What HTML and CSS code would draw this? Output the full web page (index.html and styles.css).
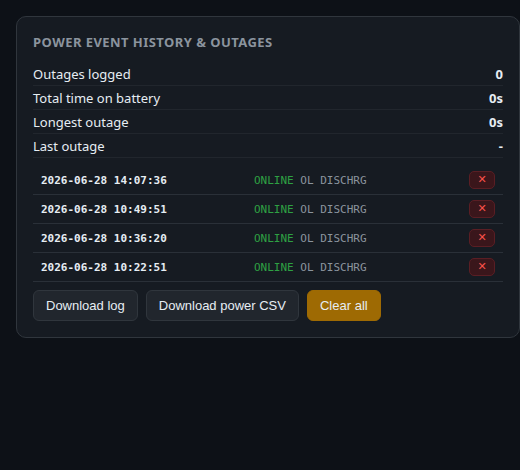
FILE: index.html
```html
<!DOCTYPE html>
<html>
<head>
<meta charset="utf-8">
<link rel="stylesheet" href="styles.css">
</head>
<body>
<section class="card">
  <h2 class="title">Power Event History &amp; Outages</h2>
  <div class="stats">
    <div class="stat"><span>Outages logged</span><b>0</b></div>
    <div class="stat"><span>Total time on battery</span><b>0s</b></div>
    <div class="stat"><span>Longest outage</span><b>0s</b></div>
    <div class="stat"><span>Last outage</span><b>-</b></div>
  </div>
  <div class="events">
    <div class="event"><span class="ts">2026-06-28 14:07:36</span><span class="st"><span class="ok">ONLINE</span> OL DISCHRG</span><button class="del">✕</button></div>
    <div class="event"><span class="ts">2026-06-28 10:49:51</span><span class="st"><span class="ok">ONLINE</span> OL DISCHRG</span><button class="del">✕</button></div>
    <div class="event"><span class="ts">2026-06-28 10:36:20</span><span class="st"><span class="ok">ONLINE</span> OL DISCHRG</span><button class="del">✕</button></div>
    <div class="event"><span class="ts">2026-06-28 10:22:51</span><span class="st"><span class="ok">ONLINE</span> OL DISCHRG</span><button class="del">✕</button></div>
  </div>
  <div class="actions">
    <button class="btn">Download log</button>
    <button class="btn">Download power CSV</button>
    <button class="btn warn">Clear all</button>
  </div>
</section>
</body>
</html>
```
FILE: styles.css
```css
html, body {
  margin: 0;
  background: #0d1117;
}
body {
  padding: 16px 0 0 16px;
  font-family: "Noto Sans", "DejaVu Sans", sans-serif;
  color: #e6edf3;
}
.card {
  box-sizing: border-box;
  width: 504px;
  background: #161b22;
  border: 1px solid #30363d;
  border-radius: 10px;
  padding: 15px 16px 16px;
}
.title {
  margin: 0 0 10px;
  font-size: 13px;
  line-height: 20px;
  font-weight: 700;
  text-transform: uppercase;
  letter-spacing: 0.45px;
  color: #8b949e;
}
.stat {
  display: flex;
  justify-content: space-between;
  align-items: center;
  height: 23px;
  border-bottom: 1px solid #21262d;
  font-size: 13px;
}
.stat b { font-weight: 700; }
.events {
  margin-top: 8px;
}
.event {
  display: grid;
  grid-template-columns: 213px 1fr auto;
  align-items: center;
  height: 28px;
  padding: 0 8px;
  border-bottom: 1px solid #2a3038;
  font-family: "DejaVu Sans Mono", monospace;
  font-size: 11px;
}
.ts { font-weight: 700; color: #e6edf3; }
.st { color: #8b949e; }
.ok { color: #2ea043; }
.del {
  box-sizing: border-box;
  width: 26px;
  height: 18px;
  padding: 0;
  border: 1px solid #5a1e24;
  border-radius: 5px;
  background: #3a161b;
  color: #f85149;
  font-size: 11px;
  font-family: "DejaVu Sans", sans-serif;
  line-height: 16px;
}
.actions {
  display: flex;
  gap: 8px;
  margin-top: 8px;
}
.btn {
  height: 31px;
  padding: 0 12px;
  border: 1px solid #30363d;
  border-radius: 6px;
  background: #21262d;
  color: #e6edf3;
  font-family: "Liberation Sans", Arial, sans-serif;
  font-size: 13px;
}
.btn.warn {
  background: #9e6a03;
  border-color: #9e6a03;
}
```
